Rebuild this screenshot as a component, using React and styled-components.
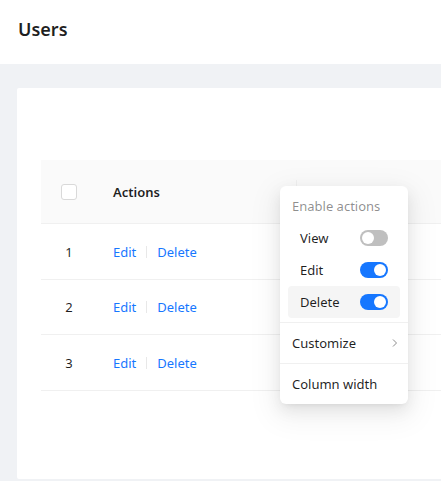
import React from 'react';
import styled, { createGlobalStyle } from 'styled-components';

const GlobalStyle = createGlobalStyle`
  html, body {
    margin: 0;
    padding: 0;
    overflow: hidden;
    background: #f0f2f5;
    font-family: "Noto Sans", "Open Sans", sans-serif;
    color: rgba(0, 0, 0, 0.88);
  }
`;

const Page = styled.div`
  width: 441px;
  height: 481px;
  display: flex;
  flex-direction: column;
  overflow: hidden;
  background: #f0f2f5;
`;

const Header = styled.header`
  height: 64px;
  flex-shrink: 0;
  box-sizing: border-box;
  background: #fff;
  display: flex;
  align-items: center;
  padding: 0 0 6px 18px;
`;

const Title = styled.h1`
  margin: 0;
  font-size: 18px;
  font-weight: 600;
  color: rgba(0, 0, 0, 0.88);
`;

const Content = styled.main`
  padding: 24px 0 0 17px;
  flex: 1;
  display: flex;
  overflow: hidden;
`;

const Card = styled.div`
  position: relative;
  width: 520px;
  height: 391px;
  flex-shrink: 0;
  background: #fff;
  border-radius: 2px;
  padding: 72px 0 0 24px;
  box-sizing: border-box;
`;

const Table = styled.div`
  width: 500px;
  display: grid;
  grid-template-columns: 56px 200px 1fr;
  font-size: 13px;
`;

const HeadCell = styled.div`
  position: relative;
  height: 64px;
  background: #fafafa;
  border-bottom: 1px solid #f0f0f0;
  box-sizing: border-box;
  display: flex;
  align-items: center;
  justify-content: ${(p) => (p.$center ? 'center' : 'flex-start')};
  padding: 0 16px;
  font-weight: 600;

  ${(p) =>
    p.$divider &&
    `
    &::after {
      content: '';
      position: absolute;
      right: 0;
      top: 50%;
      width: 1px;
      height: 24px;
      transform: translateY(-50%);
      background: #f0f0f0;
    }
  `}
`;

const Cell = styled.div`
  height: ${(p) => p.$h || 56}px;
  border-bottom: 1px solid #f0f0f0;
  box-sizing: border-box;
  display: flex;
  align-items: center;
  justify-content: ${(p) => (p.$center ? 'center' : 'flex-start')};
  padding: 0 16px;
`;

const Checkbox = styled.span`
  width: 16px;
  height: 16px;
  border: 1px solid #d9d9d9;
  border-radius: 3px;
  box-sizing: border-box;
  background: #fff;
`;

const ActionLink = styled.a`
  color: #1677ff;
  cursor: pointer;
  text-decoration: none;
`;

const Split = styled.span`
  width: 1px;
  height: 12px;
  background: #e8e8e8;
  margin: 0 10px;
`;

const Menu = styled.div`
  position: absolute;
  left: 263px;
  top: 98px;
  width: 128px;
  padding: 4px 0;
  background: #fff;
  border-radius: 6px;
  box-shadow: 0 6px 16px rgba(0, 0, 0, 0.08), 0 3px 6px -4px rgba(0, 0, 0, 0.12),
    0 9px 28px 8px rgba(0, 0, 0, 0.05);
  font-size: 13px;
`;

const GroupTitle = styled.div`
  height: 32px;
  display: flex;
  align-items: center;
  padding: 0 12px;
  color: rgba(0, 0, 0, 0.45);
`;

const ToggleRow = styled.div`
  height: 32px;
  margin: 0 8px;
  padding: 0 12px;
  border-radius: 4px;
  display: flex;
  align-items: center;
  justify-content: space-between;
  background: ${(p) => (p.$active ? '#f5f5f5' : 'transparent')};
`;

const Switch = styled.span`
  position: relative;
  width: 28px;
  height: 16px;
  border-radius: 8px;
  background: ${(p) => (p.$on ? '#1677ff' : '#bfbfbf')};

  &::after {
    content: '';
    position: absolute;
    top: 2px;
    left: ${(p) => (p.$on ? '14px' : '2px')};
    width: 12px;
    height: 12px;
    border-radius: 50%;
    background: #fff;
  }
`;

const Divider = styled.div`
  height: 1px;
  background: #f0f0f0;
  margin: 4px 0;
`;

const MenuItem = styled.div`
  height: 32px;
  padding: 0 9px 0 12px;
  display: flex;
  align-items: center;
  justify-content: space-between;
`;

const Chevron = () => (
  <svg width="8" height="10" viewBox="0 0 8 10" fill="none">
    <path d="M2 1.5 L5.5 5 L2 8.5" stroke="#8c8c8c" strokeWidth="1" />
  </svg>
);

const rows = [1, 2, 3];

const toggles = [
  { label: 'View', on: false },
  { label: 'Edit', on: true },
  { label: 'Delete', on: true, active: true },
];

export default function App() {
  return (
    <>
      <GlobalStyle />
      <Page>
        <Header>
          <Title>Users</Title>
        </Header>
        <Content>
          <Card>
            <Table>
              <HeadCell $center>
                <Checkbox />
              </HeadCell>
              <HeadCell $divider>Actions</HeadCell>
              <HeadCell />
              {rows.map((n) => (
                <React.Fragment key={n}>
                  <Cell $center $h={n === 2 ? 55 : 56}>{n}</Cell>
                  <Cell $h={n === 2 ? 55 : 56}>
                    <ActionLink>Edit</ActionLink>
                    <Split />
                    <ActionLink>Delete</ActionLink>
                  </Cell>
                  <Cell $h={n === 2 ? 55 : 56} />
                </React.Fragment>
              ))}
            </Table>

            <Menu>
              <GroupTitle>Enable actions</GroupTitle>
              {toggles.map((t) => (
                <ToggleRow key={t.label} $active={t.active}>
                  {t.label}
                  <Switch $on={t.on} />
                </ToggleRow>
              ))}
              <Divider />
              <MenuItem>
                Customize
                <Chevron />
              </MenuItem>
              <Divider />
              <MenuItem>Column width</MenuItem>
            </Menu>
          </Card>
        </Content>
      </Page>
    </>
  );
}
